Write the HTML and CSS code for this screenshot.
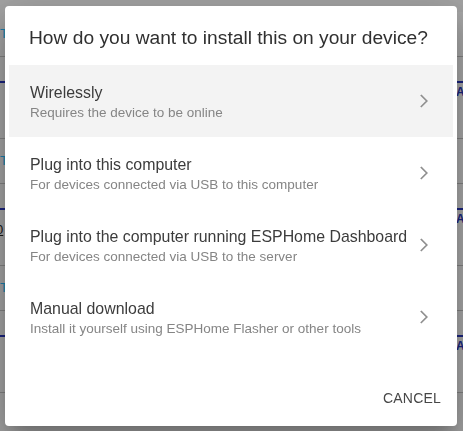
FILE: index.html
```html
<!DOCTYPE html>
<html lang="en">
<head>
<meta charset="utf-8">
<title>Install</title>
<link rel="stylesheet" href="styles.css">
</head>
<body>
<div class="page">
  <div class="col col-left">
    <div class="bg-card"><div class="bg-head">T</div><div class="bg-body"><div class="bg-bar"></div></div></div>
    <div class="bg-card"><div class="bg-head">T</div><div class="bg-body"><div class="bg-bar"></div><div class="bg-num">0</div></div></div>
    <div class="bg-card"><div class="bg-head">T</div><div class="bg-body"><div class="bg-bar"></div></div></div>
  </div>
  <div class="col col-right">
    <div class="bg-card"><div class="bg-head"></div><div class="bg-body"><div class="bg-bar"></div><div class="bg-act">A</div></div></div>
    <div class="bg-card"><div class="bg-head"></div><div class="bg-body"><div class="bg-bar"></div><div class="bg-act">A</div></div></div>
    <div class="bg-card"><div class="bg-head"></div><div class="bg-body"><div class="bg-bar"></div><div class="bg-act">A</div></div></div>
  </div>
</div>

<div class="scrim">
  <div class="dialog" role="dialog">
    <h2 class="dialog-title">How do you want to install this on your device?</h2>
    <ul class="list">
      <li class="item item-active">
        <div class="item-text">
          <div class="item-primary">Wirelessly</div>
          <div class="item-secondary">Requires the device to be online</div>
        </div>
        <svg class="chevron" viewBox="0 0 24 24"><polyline points="9.4,6.6 14.8,12 9.4,17.4"/></svg>
      </li>
      <li class="item">
        <div class="item-text">
          <div class="item-primary">Plug into this computer</div>
          <div class="item-secondary">For devices connected via USB to this computer</div>
        </div>
        <svg class="chevron" viewBox="0 0 24 24"><polyline points="9.4,6.6 14.8,12 9.4,17.4"/></svg>
      </li>
      <li class="item">
        <div class="item-text">
          <div class="item-primary">Plug into the computer running ESPHome Dashboard</div>
          <div class="item-secondary">For devices connected via USB to the server</div>
        </div>
        <svg class="chevron" viewBox="0 0 24 24"><polyline points="9.4,6.6 14.8,12 9.4,17.4"/></svg>
      </li>
      <li class="item">
        <div class="item-text">
          <div class="item-primary">Manual download</div>
          <div class="item-secondary">Install it yourself using ESPHome Flasher or other tools</div>
        </div>
        <svg class="chevron" viewBox="0 0 24 24"><polyline points="9.4,6.6 14.8,12 9.4,17.4"/></svg>
      </li>
    </ul>
    <div class="actions">
      <button class="btn" type="button">Cancel</button>
    </div>
  </div>
</div>
</body>
</html>
```

FILE: styles.css
```css
* { box-sizing: border-box; }

html, body {
  margin: 0;
  padding: 0;
  height: 100%;
  overflow: hidden;
}

body {
  background: #eeeeee;
  font-family: "Liberation Sans", Arial, sans-serif;
}

/* background dashboard (behind the scrim) */
.page {
  display: grid;
  grid-template-columns: 456px 1fr;
  padding-top: 12px;
}

.bg-card {
  display: flex;
  flex-direction: column;
}

.bg-head {
  height: 45px;
  border-bottom: 1px solid #bdbdbd;
  color: #29b6f6;
  font-size: 13px;
  line-height: 44px;
}

.bg-body {
  height: 82px;
  border-bottom: 1px solid #bdbdbd;
  padding-top: 24px;
}

.bg-bar {
  height: 2px;
  background: #2633b8;
}

.bg-act {
  color: #2633b8;
  font-size: 12px;
  font-weight: bold;
  line-height: 14px;
  padding-top: 2px;
}

.bg-num {
  color: #222;
  font-size: 13px;
  margin-top: 12px;
  margin-left: -4px;
  text-decoration: underline;
}

.col-right .bg-card {
  background: #f4f4f4;
}

/* scrim + dialog */
.scrim {
  position: fixed;
  inset: 0;
  background: rgba(0, 0, 0, 0.32);
  display: flex;
  align-items: flex-start;
  justify-content: flex-start;
  padding: 6px 0 0 5px;
}

.dialog {
  width: 452px;
  background: #ffffff;
  border-radius: 4px;
  box-shadow: 0 11px 15px -7px rgba(0, 0, 0, 0.2),
              0 24px 38px 3px rgba(0, 0, 0, 0.14),
              0 9px 46px 8px rgba(0, 0, 0, 0.12);
  display: flex;
  flex-direction: column;
}

.dialog-title {
  margin: 0;
  padding: 16px 24px 11px 24px;
  font-size: 19.2px;
  font-weight: normal;
  line-height: 32px;
  color: #303030;
}

.list {
  list-style: none;
  margin: 0 4px;
  padding: 0 0 19px 0;
}

.item {
  height: 72px;
  display: flex;
  align-items: center;
  padding: 0 17px 0 21px;
}

.item-active {
  background: #f3f3f3;
}

.item-text {
  flex: 1;
  align-self: flex-start;
  padding-top: 17.5px;
}

.item-primary {
  font-size: 15.9px;
  line-height: 20px;
  color: #3c3c3c;
  white-space: nowrap;
}

.item-secondary {
  font-size: 13.5px;
  line-height: 20px;
  color: #858585;
  white-space: nowrap;
}

.chevron {
  width: 24px;
  height: 24px;
  fill: none;
  stroke: #8f8f8f;
  stroke-width: 1.7;
  stroke-linecap: square;
  flex: none;
}

.actions {
  display: flex;
  justify-content: flex-end;
  padding: 8px 8px 10px 8px;
}

.btn {
  height: 36px;
  padding: 0 8px;
  border: none;
  background: transparent;
  font-family: "Liberation Sans", Arial, sans-serif;
  font-size: 14px;
  text-transform: uppercase;
  letter-spacing: 0.2px;
  color: #474747;
  cursor: pointer;
}
```
